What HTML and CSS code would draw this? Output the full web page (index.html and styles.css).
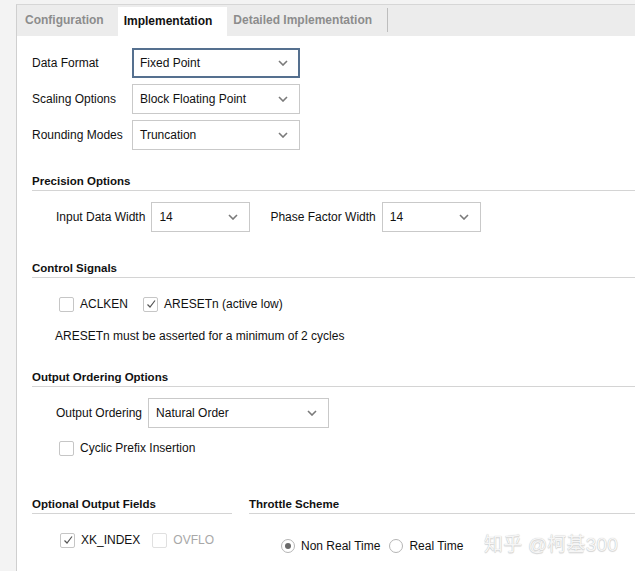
FILE: index.html
```html
<!DOCTYPE html>
<html>
<head>
<meta charset="utf-8">
<link rel="stylesheet" href="styles.css">
</head>
<body>
<div class="frame">
  <div class="tabs">
    <div class="tab first">Configuration</div>
    <div class="tab active">Implementation</div>
    <div class="tab">Detailed Implementation</div>
    <div class="tab-sep"></div>
  </div>
  <div class="content">
    <div class="form-grid">
      <div class="label">Data Format</div>
      <div class="select focused"><span>Fixed Point</span><svg class="chev" width="10" height="6" viewBox="0 0 10 6"><polyline points="1,1 5,5 9,1" fill="none" stroke="#7a7a7a" stroke-width="1.6"/></svg></div>
      <div class="label">Scaling Options</div>
      <div class="select"><span>Block Floating Point</span><svg class="chev" width="10" height="6" viewBox="0 0 10 6"><polyline points="1,1 5,5 9,1" fill="none" stroke="#7a7a7a" stroke-width="1.6"/></svg></div>
      <div class="label">Rounding Modes</div>
      <div class="select"><span>Truncation</span><svg class="chev" width="10" height="6" viewBox="0 0 10 6"><polyline points="1,1 5,5 9,1" fill="none" stroke="#7a7a7a" stroke-width="1.6"/></svg></div>
    </div>

    <div class="heading h-precision">Precision Options</div>
    <div class="inline-row precision-row">
      <span class="label-inline">Input Data Width</span>
      <div class="select small"><span>14</span><svg class="chev" width="10" height="6" viewBox="0 0 10 6"><polyline points="1,1 5,5 9,1" fill="none" stroke="#7a7a7a" stroke-width="1.6"/></svg></div>
      <span class="label-inline second">Phase Factor Width</span>
      <div class="select small"><span>14</span><svg class="chev" width="10" height="6" viewBox="0 0 10 6"><polyline points="1,1 5,5 9,1" fill="none" stroke="#7a7a7a" stroke-width="1.6"/></svg></div>
    </div>

    <div class="heading h-control">Control Signals</div>
    <div class="check-row control-row">
      <label class="check"><span class="box"></span>ACLKEN</label>
      <label class="check"><span class="box"><svg width="12" height="12" viewBox="0 0 12 12"><polyline points="2.5,6.5 5,9 10,2.5" fill="none" stroke="#555" stroke-width="1.2"/></svg></span>ARESETn (active low)</label>
    </div>
    <div class="note">ARESETn must be asserted for a minimum of 2 cycles</div>

    <div class="heading h-output">Output Ordering Options</div>
    <div class="inline-row output-row">
      <span class="label-inline">Output Ordering</span>
      <div class="select wide"><span>Natural Order</span><svg class="chev" width="10" height="6" viewBox="0 0 10 6"><polyline points="1,1 5,5 9,1" fill="none" stroke="#7a7a7a" stroke-width="1.6"/></svg></div>
    </div>
    <div class="check-row cyclic-row">
      <label class="check"><span class="box"></span>Cyclic Prefix Insertion</label>
    </div>

    <div class="bottom">
      <div class="col-left">
        <div class="heading">Optional Output Fields</div>
        <div class="check-row fields-row">
          <label class="check"><span class="box"><svg width="12" height="12" viewBox="0 0 12 12"><polyline points="2.5,6.5 5,9 10,2.5" fill="none" stroke="#555" stroke-width="1.2"/></svg></span>XK_INDEX</label>
          <label class="check disabled"><span class="box"></span>OVFLO</label>
        </div>
      </div>
      <div class="col-right">
        <div class="heading">Throttle Scheme</div>
        <div class="radio-row">
          <label class="radio"><span class="circle on"></span>Non Real Time</label>
          <label class="radio"><span class="circle"></span>Real Time</label>
        </div>
      </div>
    </div>
  </div>
</div>
<div class="watermark">知乎 @柯基300</div>
</body>
</html>
```
FILE: styles.css
```css
html, body {
  margin: 0;
  padding: 0;
}
body {
  background: #f3f3f3;
  font-family: "Liberation Sans", Arial, Helvetica, sans-serif;
  font-size: 12px;
  color: #111;
  width: 635px;
  height: 571px;
  overflow: hidden;
  position: relative;
}
.frame {
  margin: 4px 0 0 16px;
  border-left: 1px solid #cfcfcf;
  border-top: 1px solid #d6d6d6;
  background: #fff;
  height: 566px;
}
.tabs {
  display: flex;
  align-items: stretch;
  background: #ececec;
  height: 31px;
}
.tab {
  font-weight: bold;
  font-size: 12px;
  color: #8c8c8c;
  line-height: 31px;
  padding: 0 15px 0 6px;
  white-space: nowrap;
}
.tab.first {
  padding-left: 8px;
  padding-right: 14px;
}
.tab.active {
  background: #fff;
  color: #111;
  margin-top: 2px;
  line-height: 29px;
}
.tab-sep {
  width: 1px;
  background: #bdbdbd;
  margin: 3px 0 4px 0;
}
.content {
  padding: 12px 0 0 15px;
}
.form-grid {
  display: grid;
  grid-template-columns: 100px 168px;
  row-gap: 6px;
  align-items: center;
}
.label {
  white-space: nowrap;
}
.select {
  box-sizing: border-box;
  height: 30px;
  border: 1px solid #c9c9c9;
  background: #fff;
  display: flex;
  align-items: center;
  justify-content: space-between;
  padding: 0 11px 0 7px;
  white-space: nowrap;
}
.select.focused {
  border: 2px solid #55708f;
  padding: 0 10px 0 6px;
}
.select.small {
  width: 99px;
}
.select.wide {
  width: 181px;
}
.chev {
  flex: none;
}
.heading {
  font-weight: bold;
  font-size: 11.5px;
  line-height: 16px;
  padding-bottom: 1px;
  border-bottom: 1px solid #d4d4d4;
  white-space: nowrap;
}
.h-precision { margin-top: 23px; }
.h-control { margin-top: 28px; }
.h-output { margin-top: 25px; }
.inline-row {
  display: flex;
  align-items: center;
  padding-left: 24px;
}
.precision-row { margin-top: 11px; }
.output-row { margin-top: 11px; }
.label-inline {
  margin-right: 6px;
  white-space: nowrap;
}
.label-inline.second {
  margin-left: 20px;
}
.check-row {
  display: flex;
  align-items: center;
  height: 16px;
  padding-left: 27px;
}
.control-row { margin-top: 18px; }
.cyclic-row { margin-top: 12px; }
.check {
  display: flex;
  align-items: center;
  margin-right: 15px;
  white-space: nowrap;
}
.box {
  box-sizing: border-box;
  width: 15px;
  height: 15px;
  border: 1px solid #c6c6c6;
  border-radius: 2px;
  background: #fff;
  margin-right: 6px;
  display: flex;
  align-items: center;
  justify-content: center;
}
.check.disabled {
  color: #a8a8a8;
}
.check.disabled .box {
  border-color: #e0e0e0;
}
.note {
  margin-top: 16px;
  line-height: 16px;
  padding-left: 23px;
}
.bottom {
  display: flex;
  margin-top: 40px;
}
.col-left {
  width: 200px;
  margin-right: 17px;
}
.col-right {
  flex: 1;
}
.fields-row {
  margin-top: 18px;
  padding-left: 28px;
}
.fields-row .check {
  margin-right: 12px;
}
.radio-row {
  display: flex;
  align-items: center;
  height: 16px;
  margin-top: 24px;
  padding-left: 32px;
}
.radio {
  display: flex;
  align-items: center;
  margin-right: 9px;
  white-space: nowrap;
}
.circle {
  box-sizing: border-box;
  width: 14px;
  height: 14px;
  border: 1px solid #b5b5b5;
  border-radius: 50%;
  margin-right: 6px;
  display: flex;
  align-items: center;
  justify-content: center;
  background: #fff;
}
.circle.on::after {
  content: "";
  width: 6px;
  height: 6px;
  border-radius: 50%;
  background: #6a6a6a;
}
.watermark {
  position: absolute;
  left: 484px;
  top: 533px;
  font-family: "Liberation Sans", "Noto Sans CJK SC", sans-serif;
  font-size: 19px;
  line-height: 24px;
  color: #f6f6f6;
  text-shadow: 0 0 1px #b8b8b8, 0 1px 1px #d8d8d8;
  letter-spacing: 0.2px;
  white-space: nowrap;
}
```
